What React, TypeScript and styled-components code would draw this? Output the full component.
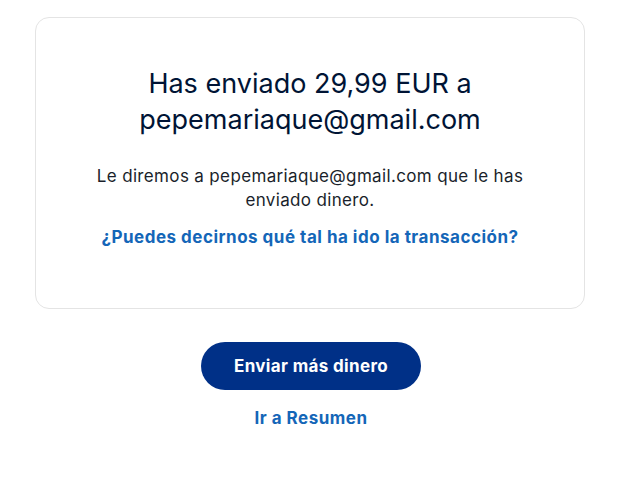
import styled, { createGlobalStyle } from 'styled-components';

const GlobalStyle = createGlobalStyle`
	html, body {
		margin: 0;
		padding: 0;
		background: #ffffff;
	}
	body {
		font-family: Inter, 'Noto Sans', Arial, sans-serif;
		color: #001435;
		-webkit-font-smoothing: antialiased;
	}
`;

const Page = styled.main`
	width: 622px;
	display: flex;
	flex-direction: column;
	align-items: center;
	padding-top: 17px;
`;

const Card = styled.section`
	box-sizing: border-box;
	width: 550px;
	height: 292px;
	margin-left: -2px;
	border: 1px solid #e4e4e4;
	border-radius: 14px;
	padding: 48px 40px 0;
	display: flex;
	flex-direction: column;
	align-items: center;
	text-align: center;
`;

const Title = styled.h1`
	margin: 0;
	font-size: 27px;
	line-height: 36px;
	font-weight: 400;
	color: #001435;
`;

const Message = styled.p`
	margin: 26px 0 0;
	font-size: 17px;
	line-height: 24px;
	letter-spacing: 0.35px;
	color: #1a1f2b;
	max-width: 450px;
`;

const TextLink = styled.a`
	display: inline-block;
	font-size: 17px;
	line-height: 24px;
	font-weight: 700;
	letter-spacing: 0.5px;
	color: #1466b8;
	text-decoration: none;
	cursor: pointer;
`;

const Feedback = styled.div`
	margin-top: 13px;
`;

const Actions = styled.div`
	display: flex;
	flex-direction: column;
	align-items: center;
	margin-top: 33px;
	gap: 16px;
`;

const PrimaryButton = styled.button`
	width: 220px;
	height: 48px;
	border: none;
	border-radius: 24px;
	background: #003087;
	color: #ffffff;
	font-family: inherit;
	font-size: 17px;
	font-weight: 700;
	letter-spacing: 0.35px;
	cursor: pointer;
`;

export default function App() {
	return (
		<>
			<GlobalStyle />
			<Page>
				<Card>
					<Title>
						Has enviado 29,99 EUR a
						<br />
						pepemariaque@gmail.com
					</Title>
					<Message>Le diremos a pepemariaque@gmail.com que le has enviado dinero.</Message>
					<Feedback>
						<TextLink>¿Puedes decirnos qué tal ha ido la transacción?</TextLink>
					</Feedback>
				</Card>
				<Actions>
					<PrimaryButton>Enviar más dinero</PrimaryButton>
					<TextLink>Ir a Resumen</TextLink>
				</Actions>
			</Page>
		</>
	);
}
